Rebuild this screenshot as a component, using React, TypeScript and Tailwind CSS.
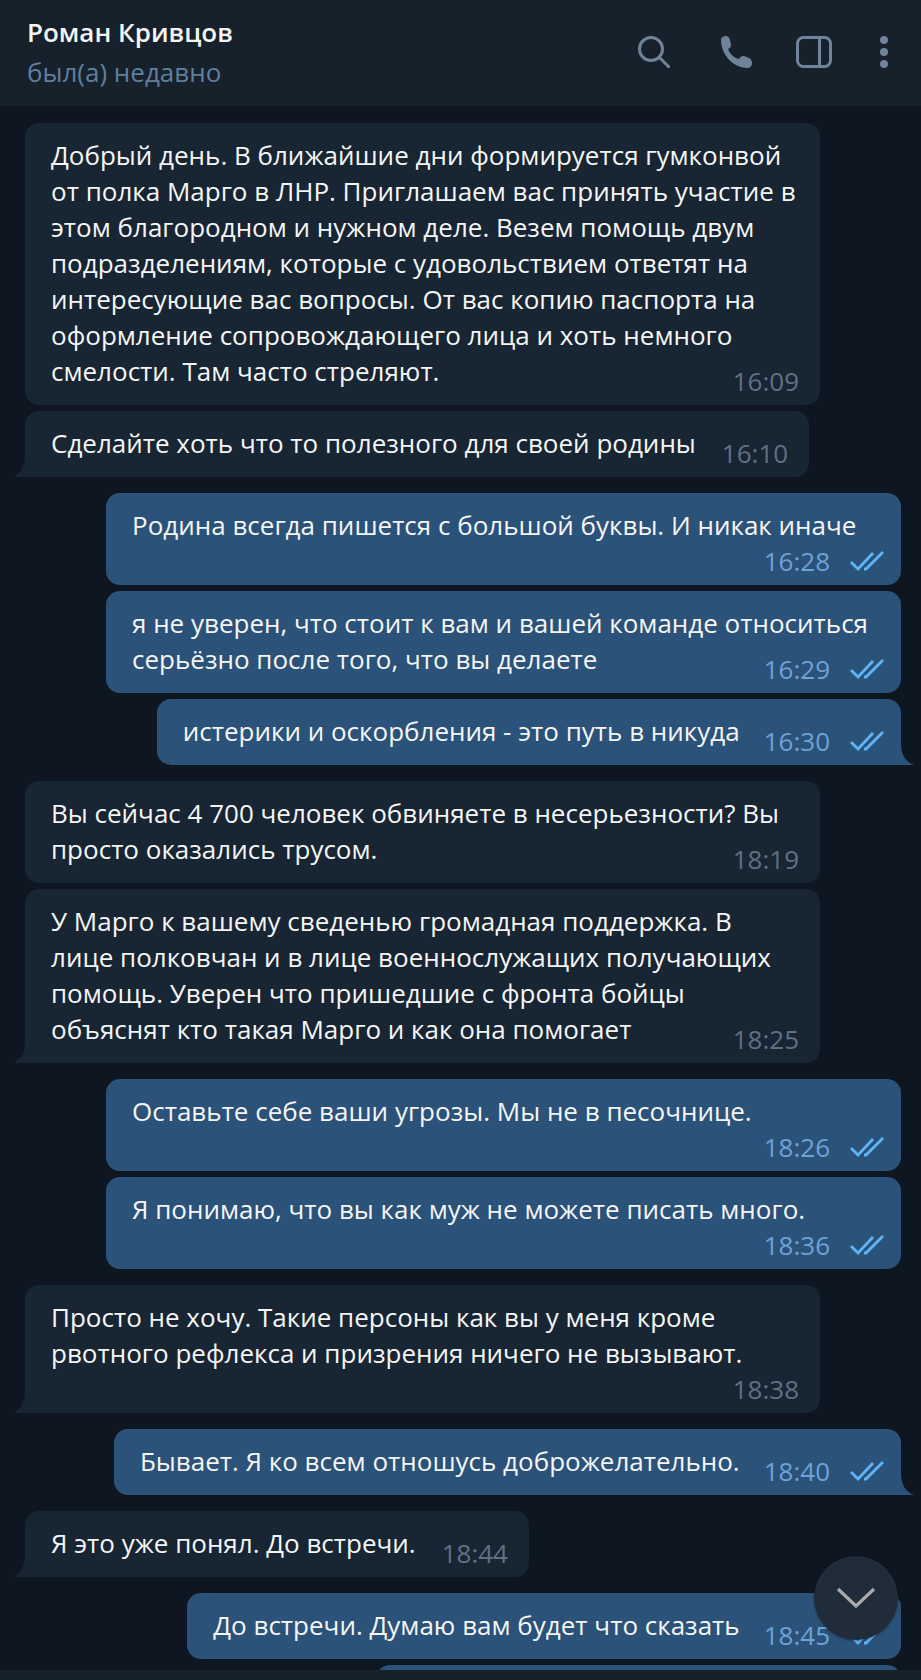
type Msg = {
  out?: boolean;
  text: string;
  time: string;
  tail?: boolean;
  below?: boolean;
  gap: string;
};

const MESSAGES: Msg[] = [
  {
    text: 'Добрый день. В ближайшие дни формируется гумконвой от полка Марго в ЛНР. Приглашаем вас принять участие в этом благородном и нужном деле. Везем помощь двум подразделениям, которые с удовольствием ответят на интересующие вас вопросы. От вас копию паспорта на оформление сопровождающего лица и хоть немного смелости. Там часто стреляют.',
    time: '16:09',
    gap: 'mt-0',
  },
  { text: 'Сделайте хоть что то полезного для своей родины', time: '16:10', tail: true, gap: 'mt-[6px]' },
  { out: true, text: 'Родина всегда пишется с большой буквы. И никак иначе', time: '16:28', below: true, gap: 'mt-4' },
  { out: true, text: 'я не уверен, что стоит к вам и вашей команде относиться серьёзно после того, что вы делаете', time: '16:29', gap: 'mt-[6px]' },
  { out: true, text: 'истерики и оскорбления - это путь в никуда', time: '16:30', tail: true, gap: 'mt-[6px]' },
  { text: 'Вы сейчас 4 700 человек обвиняете в несерьезности? Вы просто оказались трусом.', time: '18:19', gap: 'mt-4' },
  {
    text: 'У Марго к вашему сведенью громадная поддержка. В лице полковчан и в лице военнослужащих получающих помощь. Уверен что пришедшие с фронта бойцы объяснят кто такая Марго и как она помогает',
    time: '18:25',
    tail: true,
    gap: 'mt-[6px]',
  },
  { out: true, text: 'Оставьте себе ваши угрозы. Мы не в песочнице.', time: '18:26', below: true, gap: 'mt-4' },
  { out: true, text: 'Я понимаю, что вы как муж не можете писать много.', time: '18:36', below: true, gap: 'mt-[6px]' },
  {
    text: 'Просто не хочу. Такие персоны как вы у меня кроме рвотного рефлекса и призрения ничего не вызывают.',
    time: '18:38',
    tail: true,
    below: true,
    gap: 'mt-4',
  },
  { out: true, text: 'Бывает. Я ко всем отношусь доброжелательно.', time: '18:40', tail: true, gap: 'mt-4' },
  { text: 'Я это уже понял. До встречи.', time: '18:44', tail: true, gap: 'mt-4' },
  { out: true, text: 'До встречи. Думаю вам будет что сказать', time: '18:45', gap: 'mt-4' },
];

function Checks() {
  return (
    <svg width="34" height="20" viewBox="0 0 34 20" fill="none" stroke="#5eb5f7" strokeWidth="2.8" className="shrink-0">
      <path d="M1 11 L8 18 L23 2" />
      <path d="M14 18 L16 18 L33 1" />
    </svg>
  );
}

function Meta({ m }: { m: Msg }) {
  const color = m.out ? 'text-[#6ea3d6]' : 'text-[#5f7183]';
  if (m.below) {
    return (
      <div className={`-mb-[10px] flex h-9 items-center justify-end gap-5 text-[26px] leading-none ${color}`}>
        <span>{m.time}</span>
        {m.out && <Checks />}
      </div>
    );
  }
  return (
    <div className={`float-right flex h-9 items-center gap-5 pt-5 text-[26px] leading-none ${color} ${m.out ? 'ml-6' : 'ml-[26px]'}`}>
      <span>{m.time}</span>
      {m.out && <Checks />}
    </div>
  );
}

function Bubble({ m }: { m: Msg }) {
  return (
    <div
      className={`relative ${m.gap} ${m.below ? 'w-[795px]' : 'w-fit max-w-[795px]'} rounded-[14px] pt-[14px] pb-4 pl-[26px] text-[26px] leading-9 text-[#f5f5f5] flow-root
        ${m.out ? 'ml-auto bg-[#2b5278] pr-[17px]' : 'bg-[#182533] pr-[21px]'}
        ${m.tail && m.out ? 'rounded-br-none' : ''} ${m.tail && !m.out ? 'rounded-bl-none' : ''}`}
    >
      {m.text}
      <Meta m={m} />
      {m.tail && !m.out && (
        <svg width="12" height="22" viewBox="0 0 12 22" className="absolute bottom-0 -left-3">
          <path d="M12 0 C12 12 7 19 0 22 H12 Z" fill="#182533" />
        </svg>
      )}
      {m.tail && m.out && (
        <svg width="13" height="22" viewBox="0 0 13 22" className="absolute -right-[13px] bottom-0">
          <path d="M0 0 C0 12 5 19 13 22 H0 Z" fill="#2b5278" />
        </svg>
      )}
    </div>
  );
}

export default function App() {
  return (
    <div className="relative flex h-[1680px] w-[921px] flex-col overflow-hidden bg-[#0e1621] font-['Open_Sans',sans-serif]">
      {/* Шапка */}
      <div className="flex h-[106px] shrink-0 items-center justify-between bg-[#17212b] pr-[33px] pl-[27px]">
        <div className="mb-[3px]">
          <div className="text-[26px] leading-9 font-semibold text-[#f5f5f5]">Роман Кривцов</div>
          <div className="mt-1 text-[26px] leading-9 text-[#5e7f9e]">был(а) недавно</div>
        </div>
        <div className="mb-[2px] flex items-center">
          <svg width="32" height="32" viewBox="0 0 32 32" fill="none" stroke="#708499" strokeWidth="3">
            <circle cx="13" cy="13" r="11.5" />
            <path d="M21.5 21.5 L31 31" strokeLinecap="round" />
          </svg>
          <svg width="32" height="32" viewBox="0 0 32 32" fill="#708499" className="ml-[50px]">
            <path d="M1 4 C1 1 4 0 6 0 C8 0 9 1 10 4 L11 9 C11 11 10 12 8 13 C10 18 14 22 19 23 C20 21 21 20 24 20 L29 22 C31 23 32 25 32 27 C32 30 30 32 27 32 C13 32 1 18 1 4 Z" />
          </svg>
          <svg width="36" height="32" viewBox="0 0 36 32" fill="none" stroke="#708499" strokeWidth="3" className="ml-[44px]">
            <rect x="1.5" y="1.5" width="33" height="29" rx="6" />
            <path d="M23.5 2 V30" />
          </svg>
          <svg width="8" height="32" viewBox="0 0 8 32" fill="#708499" className="ml-12">
            <circle cx="4" cy="4" r="4" />
            <circle cx="4" cy="16" r="4" />
            <circle cx="4" cy="28" r="4" />
          </svg>
        </div>
      </div>

      {/* Сообщения */}
      <div className="flex-1 overflow-hidden pt-[17px] pr-5 pl-[25px]">
        {MESSAGES.map(m => (
          <Bubble key={m.time} m={m} />
        ))}
        <div className="mt-[6px] ml-auto h-[66px] w-[525px] rounded-[14px] bg-[#2b5278]" />
      </div>
      <div className="h-[10px] shrink-0 bg-[#17212b]" />

      {/* Кнопка вниз */}
      <div className="absolute top-[1556px] left-[814px] flex h-[84px] w-[84px] items-center justify-center rounded-full bg-[#202c3a] shadow-[0_1px_3px_rgba(0,0,0,0.3)]">
        <svg width="40" height="22" viewBox="0 0 40 22" fill="none" stroke="#aaaaaa" strokeWidth="3.2">
          <path d="M2 2 L20 19 L38 2" />
        </svg>
      </div>
    </div>
  );
}
